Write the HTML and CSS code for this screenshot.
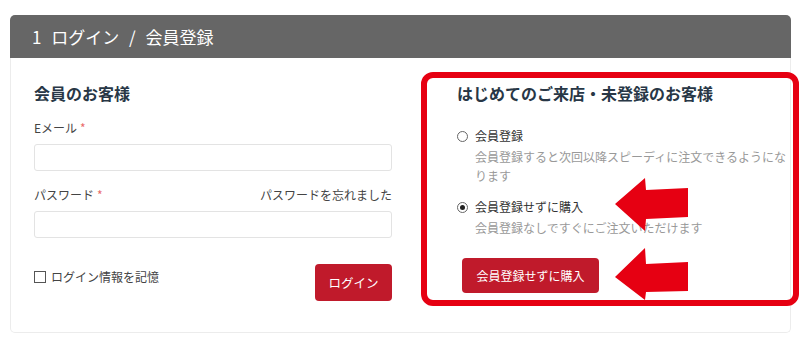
FILE: index.html
```html
<!DOCTYPE html>
<html lang="ja">
<head>
    <meta charset="UTF-8">
    <meta name="viewport" content="width=device-width, initial-scale=1.0">
    <title>ログイン / 会員登録</title>
    <link rel="stylesheet" href="styles.css">
</head>
<body>
    <div class="page">
        <section class="card">
            <h2 class="card-head">1 ログイン / 会員登録</h2>
            <div class="card-body">
                <form class="login" action="#" method="POST">
                    <h3>会員のお客様</h3>

                    <div class="field">
                        <div class="field-label">
                            <label for="email">Eメール<span class="req">*</span></label>
                        </div>
                        <input type="text" id="email" name="email" class="text-input">
                    </div>

                    <div class="field">
                        <div class="field-label">
                            <label for="password">パスワード<span class="req">*</span></label>
                            <a href="#" class="forgot">パスワードを忘れました</a>
                        </div>
                        <input type="password" id="password" name="password" class="text-input">
                    </div>

                    <div class="login-actions">
                        <label class="remember"><span class="check"></span>ログイン情報を記憶</label>
                        <button type="submit" class="btn login-btn">ログイン</button>
                    </div>
                </form>

                <div class="guest">
                    <h3>はじめてのご来店・未登録のお客様</h3>

                    <div class="option first">
                        <label class="option-label"><span class="radio"></span>会員登録</label>
                        <p class="option-desc">会員登録すると次回以降スピーディに注文できるようになります</p>
                    </div>

                    <div class="option">
                        <label class="option-label"><span class="radio checked"></span>会員登録せずに購入</label>
                        <p class="option-desc">会員登録なしですぐにご注文いただけます</p>
                    </div>

                    <button type="button" class="btn guest-btn">会員登録せずに購入</button>
                </div>
            </div>
        </section>

        <!-- annotation drawn over the form -->
        <svg class="annotation" width="800" height="337" viewBox="0 0 800 337">
            <rect x="424" y="75" width="372" height="228" rx="9" fill="none" stroke="#e60012" stroke-width="6"/>
            <polygon fill="#e60012" points="615,204 645,178 646,190 688,188 688,217 646,219 645,231"/>
            <polygon fill="#e60012" points="615,277 645,248 646,264 688,262 688,291 646,292 645,300"/>
        </svg>
    </div>
</body>
</html>
```

FILE: styles.css
```css
body {
    margin: 0;
    font-family: "Noto Sans CJK JP", sans-serif;
    color: #444;
    background: #fff;
}
.page {
    position: relative;
    padding: 15px 9px 0 10px;
    height: 337px;
    box-sizing: border-box;
}
.card-head {
    margin: 0;
    height: 43px;
    padding-left: 22px;
    display: flex;
    align-items: center;
    background: #666;
    color: #fff;
    font-size: 17px;
    font-weight: normal;
    word-spacing: 6px;
    border-radius: 5px 5px 0 0;
}
.card-body {
    display: grid;
    grid-template-columns: 358px 1fr;
    column-gap: 65px;
    padding: 24px 0 31px 23px;
    border: 1px solid #ececec;
    border-top: none;
    border-radius: 0 0 5px 5px;
}
h3 {
    margin: 0;
    font-size: 16px;
    line-height: 22px;
    color: #283746;
    font-weight: bold;
}
.field {
    margin-top: 15px;
}
.field-label {
    display: flex;
    justify-content: space-between;
    margin-bottom: 7px;
    font-size: 12px;
    line-height: 18px;
}
.req {
    color: #ea6a6a;
    margin-left: 3px;
}
.forgot {
    color: #444;
    text-decoration: none;
}
.text-input {
    display: block;
    width: 100%;
    height: 27px;
    box-sizing: border-box;
    border: 1px solid #e3e3e3;
    border-radius: 3px;
    outline: none;
}
.login-actions {
    display: flex;
    justify-content: space-between;
    align-items: flex-start;
    margin-top: 26px;
}
.remember {
    display: flex;
    align-items: center;
    gap: 5px;
    margin-top: 4px;
    font-size: 12px;
    line-height: 18px;
}
.check {
    width: 12px;
    height: 12px;
    box-sizing: border-box;
    border: 1px solid #555;
}
.btn {
    background: #c01a2b;
    color: #fff;
    border: none;
    border-radius: 4px;
    font-family: inherit;
    font-size: 12px;
    cursor: pointer;
}
.login-btn {
    height: 37px;
    width: 77px;
    padding: 0;
    font-size: 12.5px;
}
.option.first {
    margin-top: 23px;
}
.option {
    margin-top: 13px;
}
.option-label {
    display: flex;
    align-items: center;
    gap: 7px;
    font-size: 12px;
    line-height: 18px;
    color: #333;
}
.radio {
    width: 11px;
    height: 11px;
    box-sizing: border-box;
    border: 1px solid #666;
    border-radius: 50%;
    position: relative;
}
.radio.checked::after {
    content: "";
    position: absolute;
    top: 2px;
    left: 2px;
    width: 5px;
    height: 5px;
    border-radius: 50%;
    background: #222;
}
.option-desc {
    margin: 2px 0 0 18px;
    font-size: 12px;
    line-height: 19px;
    color: #999;
}
.guest-btn {
    display: block;
    margin: 21px 0 0 5px;
    height: 35px;
    width: 137px;
    padding: 0;
}
.annotation {
    position: absolute;
    top: 0;
    left: 0;
    pointer-events: none;
}
```
